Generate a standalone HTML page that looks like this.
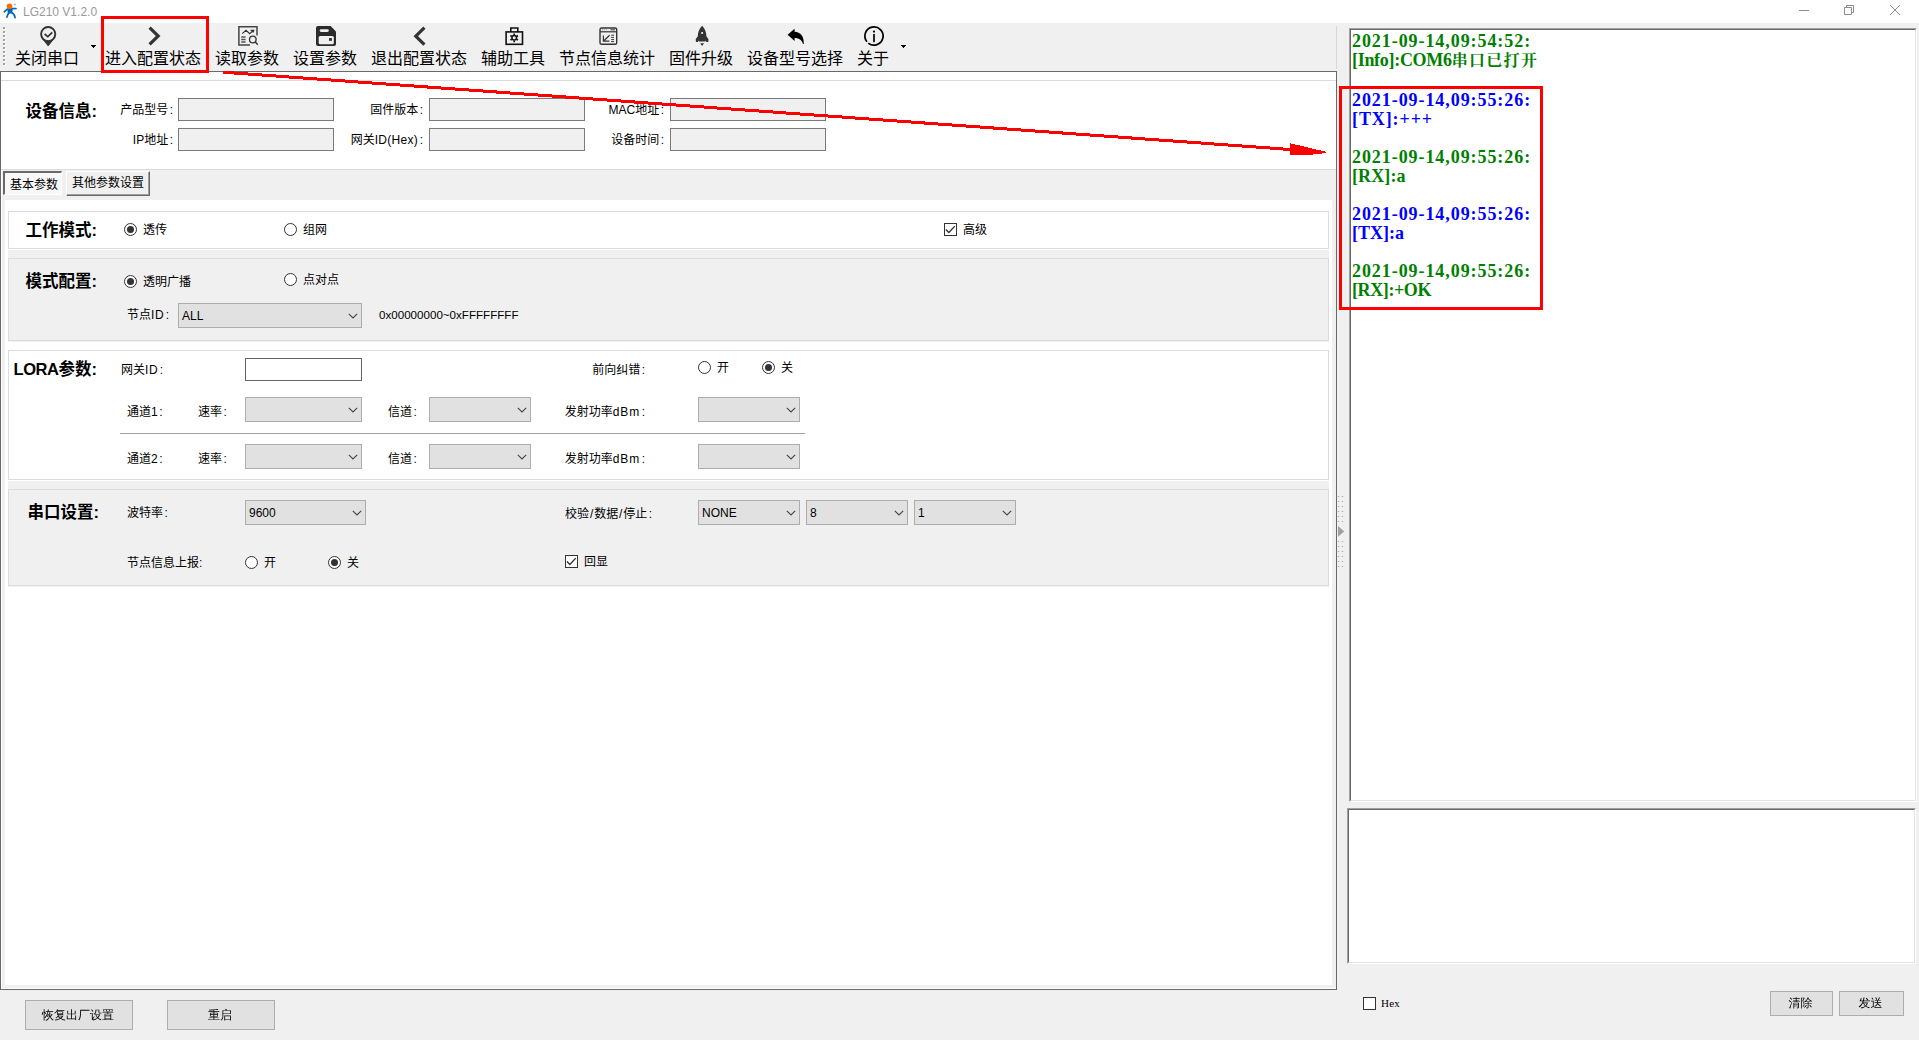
<!DOCTYPE html>
<html lang="zh-CN">
<head>
<meta charset="utf-8">
<title>LG210 V1.2.0</title>
<style>
html,body{margin:0;padding:0;}
body{width:1919px;height:1040px;overflow:hidden;background:#f0f0f0;position:relative;
 font-family:"Liberation Sans","Noto Sans CJK SC",sans-serif;font-size:12px;color:#000;}
*{box-sizing:border-box;}
.abs{position:absolute;}
#titlebar{left:0;top:0;width:1919px;height:23px;background:#fff;}
#title{left:23px;top:4px;font-size:12px;line-height:16px;color:#999;white-space:nowrap;}
#toolbar{left:0;top:23px;width:1337px;height:48px;background:#f0f0f0;}
.tb{position:absolute;top:50px;height:18px;line-height:18px;font-size:16px;white-space:nowrap;color:#000;}
.t{position:absolute;white-space:nowrap;line-height:16px;height:16px;font-size:12px;}
.r{text-align:right;}
.t i{font-style:normal;margin-left:1.5px;}
.t b{font-weight:normal;letter-spacing:0.6px;}
.t u{text-decoration:none;margin:0 0.9px;}
.h{position:absolute;white-space:nowrap;line-height:20px;height:20px;font-size:16.5px;font-weight:bold;text-align:right;width:100px;left:-3px;}
.in{position:absolute;height:23px;border:1px solid #7a7a7a;background:#f0f0f0;}
.sel{position:absolute;height:25px;border:1px solid #adadad;background:#e1e1e1;line-height:23px;font-size:12px;padding-left:3px;padding-top:1px;}
.sel svg{position:absolute;right:3px;top:9px;}
.rad{position:absolute;width:13px;height:13px;border-radius:50%;border:1px solid #333;background:#fff;}
.rad.on::after{content:"";position:absolute;left:2px;top:2px;width:7px;height:7px;border-radius:50%;background:#333;}
.chk{position:absolute;width:13px;height:13px;border:1px solid #333;background:#fff;}
.grp{position:absolute;left:8px;width:1321px;border:1px solid #dcdcdc;}
.btn{position:absolute;border:1px solid #adadad;background:#e1e1e1;text-align:center;font-size:12px;padding-right:2px;
 font-family:"Liberation Sans","WenQuanYi Zen Hei","Noto Sans CJK SC",sans-serif;}
.log{position:absolute;left:1352px;white-space:nowrap;font-family:"Liberation Serif","Noto Serif CJK SC",serif;font-weight:bold;font-size:18px;line-height:20px;height:20px;letter-spacing:0.93px;}
.cj{font-family:"Noto Serif CJK SC",serif;font-size:16px;letter-spacing:1.3px;font-weight:700;}
.g{color:#008000;}
.b{color:#0000ff;}
</style>
</head>
<body>
<!-- title bar -->
<div class="abs" id="titlebar"></div>
<svg class="abs" style="left:0;top:0" width="22" height="22" viewBox="0 0 22 22">
 <g fill="none" stroke="#0068b7" stroke-linecap="round" stroke-linejoin="round">
  <path d="M4.3 11.8 L7.2 9.2 L12.3 8.6 L16 8.5" stroke-width="1.7"/>
  <path d="M8.2 9.8 L11.8 9.4 L11.6 12.6 L8.6 12.8 Z" stroke-width="1.6" fill="#0068b7"/>
  <path d="M9.3 12.8 C7.6 13.8 7.2 15.6 6.9 17.2" stroke-width="1.7"/>
  <path d="M11.6 12.6 C13.8 13.6 14.8 15.4 15.1 17.6" stroke-width="1.7"/>
 </g>
 <circle cx="9.5" cy="6.3" r="2.8" fill="#ff6a00"/>
 <circle cx="14.8" cy="4.5" r="1.1" fill="#8fc1e6"/>
</svg>
<div class="abs" id="title">LG210 V1.2.0</div>
<svg class="abs" style="left:1790px;top:0" width="129" height="23" viewBox="0 0 129 23" fill="none" stroke="#8c8c8c" stroke-width="1">
 <path d="M9 10.5 H19"/>
 <path d="M54.5 7.5 H61.5 V14.5 H54.5 Z"/>
 <path d="M56.5 7.5 V5.5 H63.5 V12.5 H61.5"/>
 <path d="M100 5 L110 15 M110 5 L100 15"/>
</svg>

<!-- toolbar -->
<div class="abs" id="toolbar"></div>
<svg class="abs" style="left:0;top:23px" width="1337" height="48" viewBox="0 23 1337 48">
 <!-- grip -->
 <g shape-rendering="crispEdges"><rect x="4" y="28" width="2" height="2" fill="#fff"/><rect x="3" y="27" width="2" height="2" fill="#a0a0a0"/><rect x="4" y="32" width="2" height="2" fill="#fff"/><rect x="3" y="31" width="2" height="2" fill="#a0a0a0"/><rect x="4" y="36" width="2" height="2" fill="#fff"/><rect x="3" y="35" width="2" height="2" fill="#a0a0a0"/><rect x="4" y="40" width="2" height="2" fill="#fff"/><rect x="3" y="39" width="2" height="2" fill="#a0a0a0"/><rect x="4" y="44" width="2" height="2" fill="#fff"/><rect x="3" y="43" width="2" height="2" fill="#a0a0a0"/><rect x="4" y="48" width="2" height="2" fill="#fff"/><rect x="3" y="47" width="2" height="2" fill="#a0a0a0"/><rect x="4" y="52" width="2" height="2" fill="#fff"/><rect x="3" y="51" width="2" height="2" fill="#a0a0a0"/><rect x="4" y="56" width="2" height="2" fill="#fff"/><rect x="3" y="55" width="2" height="2" fill="#a0a0a0"/><rect x="4" y="60" width="2" height="2" fill="#fff"/><rect x="3" y="59" width="2" height="2" fill="#a0a0a0"/><rect x="4" y="64" width="2" height="2" fill="#fff"/><rect x="3" y="63" width="2" height="2" fill="#a0a0a0"/></g>
 <!-- 1 pin with check -->
 <g fill="none" stroke="#333" stroke-width="1.9">
  <circle cx="48.2" cy="34.1" r="7.1"/>
  <path d="M44.6 34 L47.8 36.6 L52.3 32.3" stroke-width="1.7"/>
 </g>
 <path d="M41.6 37.5 L48.2 46 L54.8 37.5 C52.5 40.6 50.6 41.3 48.2 41.3 C45.8 41.3 43.9 40.6 41.6 37.5 Z" fill="#333" stroke="#333" stroke-width="0.8" stroke-linejoin="round"/>
 <path d="M91 45 H96 V46 H95 V47 H94 V48 H93 V47 H92 V46 H91 Z" fill="#000" shape-rendering="crispEdges"/>
 <!-- 2 chevron right -->
 <path d="M149.6 27.6 L158.2 36 L149.6 44.4" fill="none" stroke="#333" stroke-width="3.2"/>
 <!-- 3 read params -->
 <g fill="none" stroke="#444" stroke-width="1.5">
  <path d="M250 45 H238.9 V26.8 H257 V35.4"/>
  <path d="M242.2 33.6 L246 30.4 L249.7 33.6 L253.4 30.4 M250.6 30.3 H253.8 L253 32.6" stroke="#333" stroke-width="1.2"/>
  <path d="M241.2 37 H245.6 M241.2 39.5 H245.6 M241.2 42 H245.6" stroke="#555" stroke-width="1.3"/>
  <circle cx="252.8" cy="39.5" r="3.3" stroke="#333" stroke-width="1.3"/>
  <path d="M255.3 42 L257.8 44.7" stroke="#333" stroke-width="1.4"/>
 </g>
 <!-- 4 save -->
 <path d="M318 26 H330.6 L336 31.4 V44 Q336 46 334 46 H318 Q316 46 316 44 V28 Q316 26 318 26 Z" fill="#2b2b2b"/>
 <rect x="319.7" y="29.2" width="9.1" height="2.8" rx="1.4" fill="#f0f0f0"/>
 <rect x="318.7" y="36" width="15.1" height="8.3" rx="1.5" fill="#f0f0f0"/>
 <rect x="329" y="38.1" width="2.9" height="2.7" fill="#2b2b2b"/>
 <!-- 5 chevron left -->
 <path d="M424.4 27.6 L415.8 36.2 L424.4 44.6" fill="none" stroke="#333" stroke-width="3.2"/>
 <!-- 6 toolbox -->
 <g fill="none" stroke="#111" stroke-width="1.6">
  <rect x="506.1" y="31.9" width="16.4" height="12.4"/>
  <path d="M510.8 31.9 V28 H517.8 V31.9"/>
  <circle cx="514.2" cy="37.8" r="2.3" stroke-width="1.5"/>
  <path d="M514.2 33.4 V35 M514.2 40.6 V42.2 M510.4 35.6 L511.8 36.4 M516.6 39.2 L518 40 M510.4 40 L511.8 39.2 M516.6 36.4 L518 35.6" stroke-width="1.7"/>
 </g>
 <!-- 7 stats window -->
 <g fill="none" stroke="#333" stroke-width="1.4">
  <rect x="600" y="28" width="16.7" height="16.3" rx="1.6"/>
  <path d="M600 31.8 H616.7" stroke-width="1.2"/>
  <path d="M601.8 29.8 H607" stroke="#999" stroke-width="1" stroke-dasharray="1.2 0.8"/>
  <path d="M610.5 29.8 H615" stroke-width="1"/>
  <path d="M609.6 35.2 L603.6 41 M603.4 35.4 V41.2 H609.4" stroke-width="1.2"/>
  <path d="M611.2 35.2 H614 M611.2 37.4 H614 M611.2 39.6 H614 M611.2 41.6 H614" stroke-width="1"/>
 </g>
 <!-- 8 rocket -->
 <path d="M702.1 25.8 C705.4 29.3 706.3 32.6 706.4 36.2 L708.4 39 V41.3 Q708.4 41.9 707.8 41.9 H706.3 L705.7 40.5 L705.2 41.6 H699 L698.5 40.5 L697.9 41.9 H696.4 Q695.8 41.9 695.8 41.3 V39 L697.8 36.2 C697.9 32.6 698.8 29.3 702.1 25.8 Z" fill="#333"/>
 <path d="M700.2 43.2 H704 L702.1 46 Z" fill="#333"/>
 <circle cx="702.1" cy="33.1" r="1" fill="#fff"/>
 <!-- 9 reply -->
 <path d="M787.6 34.8 L794.6 28.7 V31.7 C800.6 31.9 804 36.2 803.8 43.9 L803 43.9 C802 40.3 799.6 37.9 794.6 37.9 V40.9 Z" fill="#000"/>
 <!-- 10 info -->
 <g fill="none" stroke="#000" stroke-width="1.7">
  <path d="M866.93 41.73 A9.1 9.1 0 1 1 868.27 43.07"/>
  <path d="M874 34.6 V41.5" stroke-linecap="round"/>
 </g>
 <circle cx="874" cy="31.6" r="1.1" fill="#000"/>
 <path d="M901 45 H906 V46 H905 V47 H904 V48 H903 V47 H902 V46 H901 Z" fill="#000" shape-rendering="crispEdges"/>
 <!-- right gradient separator -->
 <path d="M1336.5 26 V69" stroke="#d8d8d8" stroke-width="1"/>
</svg>
<div class="tb" style="left:15px">关闭串口</div>
<div class="tb" style="left:105px">进入配置状态</div>
<div class="tb" style="left:215px">读取参数</div>
<div class="tb" style="left:293px">设置参数</div>
<div class="tb" style="left:371px">退出配置状态</div>
<div class="tb" style="left:481px">辅助工具</div>
<div class="tb" style="left:559px">节点信息统计</div>
<div class="tb" style="left:669px">固件升级</div>
<div class="tb" style="left:747px">设备型号选择</div>
<div class="tb" style="left:857px">关于</div>

<!-- main left panel -->
<div class="abs" id="panel" style="left:0;top:71px;width:1337px;height:919px;border:1px solid #696969;background:#fff;"></div>
<!-- device info group -->
<div class="abs" style="left:1px;top:80px;width:1335px;height:90px;border-top:1px solid #dcdcdc;border-bottom:1px solid #dcdcdc;"></div>
<div class="h" style="top:101px">设备信息:</div>
<div class="t r" style="left:73px;width:100px;top:102px">产品型号<i>:</i></div>
<div class="in" style="left:178px;top:98px;width:156px"></div>
<div class="t r" style="left:73px;width:100px;top:132px">IP地址<i>:</i></div>
<div class="in" style="left:178px;top:128px;width:156px"></div>
<div class="t r" style="left:323px;width:100px;top:102px">固件版本<i>:</i></div>
<div class="in" style="left:429px;top:98px;width:156px"></div>
<div class="t r" style="left:323px;width:100px;top:132px">网关<b style="letter-spacing:0.3px">ID(Hex)</b><i>:</i></div>
<div class="in" style="left:429px;top:128px;width:156px"></div>
<div class="t r" style="left:564px;width:100px;top:102px">MAC地址<i>:</i></div>
<div class="in" style="left:670px;top:98px;width:156px"></div>
<div class="t r" style="left:564px;width:100px;top:132px">设备时间<i>:</i></div>
<div class="in" style="left:670px;top:128px;width:156px"></div>

<!-- tab control -->
<div class="abs" style="left:1px;top:170px;width:1335px;height:819px;background:#f0f0f0;border-left:1px solid #fff;border-bottom:1px solid #fff;"></div>
<div class="abs" style="left:5px;top:200px;width:1327px;height:785px;background:#fff;"></div>
<div class="abs" style="left:3px;top:171px;width:59px;height:24px;background:#f8f8f8;border-top:2px solid #696969;border-left:2px solid #696969;border-right:1px solid #fff;border-bottom:1px solid #fff;"></div>
<div class="t" style="left:10px;top:177px">基本参数</div>
<div class="abs" style="left:66px;top:171px;width:84px;height:25px;background:#f0f0f0;border-top:1px solid #fff;border-left:1px solid #fff;border-right:1px solid #696969;border-bottom:1px solid #696969;"></div>
<div class="abs" style="left:67px;top:172px;width:82px;height:23px;border-right:1px solid #a0a0a0;border-bottom:1px solid #a0a0a0;"></div>
<div class="t" style="left:72px;top:175px">其他参数设置</div>

<!-- group 1: work mode -->
<div class="grp" style="top:211px;height:38px;background:#fff;"></div>
<div class="h" style="top:220px">工作模式:</div>
<div class="rad on" style="left:124px;top:223px"></div>
<div class="t" style="left:143px;top:222px">透传</div>
<div class="rad" style="left:284px;top:223px"></div>
<div class="t" style="left:303px;top:222px">组网</div>
<div class="chk" style="left:944px;top:223px"><svg width="11" height="11" viewBox="0 0 11 11" style="position:absolute;left:0;top:0"><path d="M0.9 5.4 L3.9 8.5 L9.8 2.1" fill="none" stroke="#333" stroke-width="1.4"/></svg></div>
<div class="t" style="left:963px;top:222px">高级</div>

<!-- group 2: mode config -->
<div class="abs" style="left:8px;top:250px;width:1321px;height:92px;background:#f0f0f0;"></div>
<div class="grp" style="top:258px;height:83px;"></div>
<div class="h" style="top:271px">模式配置:</div>
<div class="rad on" style="left:124px;top:275px"></div>
<div class="t" style="left:143px;top:274px">透明广播</div>
<div class="rad" style="left:284px;top:273px"></div>
<div class="t" style="left:303px;top:272px">点对点</div>
<div class="t" style="left:127px;top:307px">节点<b>ID</b><i>:</i></div>
<div class="sel" style="left:178px;top:303px;width:184px">ALL<svg width="10" height="6" viewBox="0 0 10 6"><path d="M0.8 0.8 L5 5 L9.2 0.8" fill="none" stroke="#444" stroke-width="1.1"/></svg></div>
<div class="t" style="left:379px;top:307px;font-size:11.6px">0x00000000~0xFFFFFFFF</div>

<!-- group 3: LORA -->
<div class="grp" style="top:350px;height:130px;background:#fff;"></div>
<div class="h" style="top:359px"><span style="letter-spacing:-0.45px">LORA</span>参数:</div>
<div class="t" style="left:121px;top:362px">网关<b>ID</b><i>:</i></div>
<div class="abs" style="left:245px;top:358px;width:117px;height:23px;border:1px solid #646464;background:#fff;"></div>
<div class="t r" style="left:545px;width:100px;top:362px">前向纠错<i>:</i></div>
<div class="rad" style="left:698px;top:361px"></div>
<div class="t" style="left:717px;top:360px">开</div>
<div class="rad on" style="left:762px;top:361px"></div>
<div class="t" style="left:781px;top:360px">关</div>

<div class="t" style="left:127px;top:404px">通道1<i>:</i></div>
<div class="t" style="left:198px;top:404px">速率<i>:</i></div>
<div class="sel" style="left:245px;top:397px;width:117px"><svg width="10" height="6" viewBox="0 0 10 6"><path d="M0.8 0.8 L5 5 L9.2 0.8" fill="none" stroke="#444" stroke-width="1.1"/></svg></div>
<div class="t" style="left:388px;top:404px">信道<i>:</i></div>
<div class="sel" style="left:429px;top:397px;width:102px"><svg width="10" height="6" viewBox="0 0 10 6"><path d="M0.8 0.8 L5 5 L9.2 0.8" fill="none" stroke="#444" stroke-width="1.1"/></svg></div>
<div class="t r" style="left:545px;width:100px;top:404px">发射功率<b style="letter-spacing:0.9px">dBm</b><i>:</i></div>
<div class="sel" style="left:698px;top:397px;width:102px"><svg width="10" height="6" viewBox="0 0 10 6"><path d="M0.8 0.8 L5 5 L9.2 0.8" fill="none" stroke="#444" stroke-width="1.1"/></svg></div>
<div class="abs" style="left:120px;top:433px;width:685px;height:1px;background:#a0a0a0;"></div>
<div class="t" style="left:127px;top:451px">通道2<i>:</i></div>
<div class="t" style="left:198px;top:451px">速率<i>:</i></div>
<div class="sel" style="left:245px;top:444px;width:117px"><svg width="10" height="6" viewBox="0 0 10 6"><path d="M0.8 0.8 L5 5 L9.2 0.8" fill="none" stroke="#444" stroke-width="1.1"/></svg></div>
<div class="t" style="left:388px;top:451px">信道<i>:</i></div>
<div class="sel" style="left:429px;top:444px;width:102px"><svg width="10" height="6" viewBox="0 0 10 6"><path d="M0.8 0.8 L5 5 L9.2 0.8" fill="none" stroke="#444" stroke-width="1.1"/></svg></div>
<div class="t r" style="left:545px;width:100px;top:451px">发射功率<b style="letter-spacing:0.9px">dBm</b><i>:</i></div>
<div class="sel" style="left:698px;top:444px;width:102px"><svg width="10" height="6" viewBox="0 0 10 6"><path d="M0.8 0.8 L5 5 L9.2 0.8" fill="none" stroke="#444" stroke-width="1.1"/></svg></div>

<!-- group 4: serial -->
<div class="abs" style="left:8px;top:481px;width:1321px;height:106px;background:#f0f0f0;"></div>
<div class="grp" style="top:489px;height:97px;"></div>
<div class="h" style="top:502px;left:-1px">串口设置:</div>
<div class="t" style="left:127px;top:505px">波特率<i>:</i></div>
<div class="sel" style="left:245px;top:500px;width:121px">9600<svg width="10" height="6" viewBox="0 0 10 6"><path d="M0.8 0.8 L5 5 L9.2 0.8" fill="none" stroke="#444" stroke-width="1.1"/></svg></div>
<div class="t" style="left:565px;top:506px">校验<u>/</u>数据<u>/</u>停止<i>:</i></div>
<div class="sel" style="left:698px;top:500px;width:102px">NONE<svg width="10" height="6" viewBox="0 0 10 6"><path d="M0.8 0.8 L5 5 L9.2 0.8" fill="none" stroke="#444" stroke-width="1.1"/></svg></div>
<div class="sel" style="left:806px;top:500px;width:102px">8<svg width="10" height="6" viewBox="0 0 10 6"><path d="M0.8 0.8 L5 5 L9.2 0.8" fill="none" stroke="#444" stroke-width="1.1"/></svg></div>
<div class="sel" style="left:914px;top:500px;width:102px">1<svg width="10" height="6" viewBox="0 0 10 6"><path d="M0.8 0.8 L5 5 L9.2 0.8" fill="none" stroke="#444" stroke-width="1.1"/></svg></div>
<div class="t" style="left:127px;top:555px">节点信息上报:</div>
<div class="rad" style="left:245px;top:556px"></div>
<div class="t" style="left:264px;top:555px">开</div>
<div class="rad on" style="left:328px;top:556px"></div>
<div class="t" style="left:347px;top:555px">关</div>
<div class="chk" style="left:565px;top:555px"><svg width="11" height="11" viewBox="0 0 11 11" style="position:absolute;left:0;top:0"><path d="M0.9 5.4 L3.9 8.5 L9.8 2.1" fill="none" stroke="#333" stroke-width="1.4"/></svg></div>
<div class="t" style="left:584px;top:554px">回显</div>

<!-- bottom-left buttons -->
<div class="btn" style="left:25px;top:1000px;width:108px;height:30px;line-height:28px">恢复出厂设置</div>
<div class="btn" style="left:167px;top:1000px;width:108px;height:30px;line-height:28px">重启</div>

<!-- splitter -->
<svg class="abs" style="left:1337px;top:490px" width="12" height="80" viewBox="0 0 12 80">
 <path d="M1.5 6 V32 M5.5 6 V32 M1.5 51 V77 M5.5 51 V77" stroke="#b0b0b0" stroke-width="1.4" stroke-dasharray="1 4" fill="none"/>
 <path d="M1 36 L7.2 41.4 L1 46.8 Z" fill="#a0a0a0"/>
</svg>

<!-- log box -->
<div class="abs" style="left:1349px;top:28px;width:568px;height:774px;background:#fff;border-top:1px solid #a0a0a0;border-left:1px solid #a0a0a0;border-right:1px solid #fff;border-bottom:1px solid #fff;"></div>
<div class="abs" style="left:1350px;top:29px;width:566px;height:772px;border-top:1px solid #696969;border-left:1px solid #696969;border-right:1px solid #e3e3e3;border-bottom:1px solid #e3e3e3;"></div>
<div class="log g" style="top:31px">2021-09-14,09:54:52:</div>
<div class="log g" style="top:50px;letter-spacing:-0.3px">[Info]:COM6<span class="cj">串口已打开</span></div>
<div class="log b" style="top:90px">2021-09-14,09:55:26:</div>
<div class="log b" style="top:109px;letter-spacing:0.9px">[TX]:+++</div>
<div class="log g" style="top:147px">2021-09-14,09:55:26:</div>
<div class="log g" style="top:166px;letter-spacing:0.1px">[RX]:a</div>
<div class="log b" style="top:204px">2021-09-14,09:55:26:</div>
<div class="log b" style="top:223px;letter-spacing:0px">[TX]:a</div>
<div class="log g" style="top:261px">2021-09-14,09:55:26:</div>
<div class="log g" style="top:280px;letter-spacing:-0.4px">[RX]:+OK</div>

<!-- send box -->
<div class="abs" style="left:1347px;top:808px;width:569px;height:156px;background:#fff;border-top:1px solid #a0a0a0;border-left:1px solid #a0a0a0;border-right:1px solid #fff;border-bottom:1px solid #fff;"></div>
<div class="abs" style="left:1348px;top:809px;width:567px;height:154px;border-top:1px solid #696969;border-left:1px solid #696969;border-right:1px solid #e3e3e3;border-bottom:1px solid #e3e3e3;"></div>

<div class="chk" style="left:1363px;top:997px"></div>
<div class="t" style="left:1381px;top:995px;font-family:'Liberation Serif',serif;font-size:11px;letter-spacing:0.2px">Hex</div>
<div class="btn" style="left:1770px;top:991px;width:63px;height:25px;line-height:23px">清除</div>
<div class="btn" style="left:1839px;top:991px;width:65px;height:25px;line-height:23px">发送</div>

<!-- red annotations -->
<svg class="abs" style="left:0;top:0" width="1919" height="1040" viewBox="0 0 1919 1040">
 <rect x="102.5" y="17.5" width="105" height="54" fill="none" stroke="#ff0000" stroke-width="3"/>
 <rect x="1340.5" y="87.5" width="201" height="221" fill="none" stroke="#ff0000" stroke-width="3"/>
 <path d="M223 72.2 L1293 149.7" stroke="#ff0000" stroke-width="3" fill="none" shape-rendering="crispEdges"/>
 <path d="M1290 143.2 L1326 151.8 L1326 153 L1308 155 L1290 155 Z" fill="#ff0000" shape-rendering="crispEdges"/>
</svg>
</body>
</html>
